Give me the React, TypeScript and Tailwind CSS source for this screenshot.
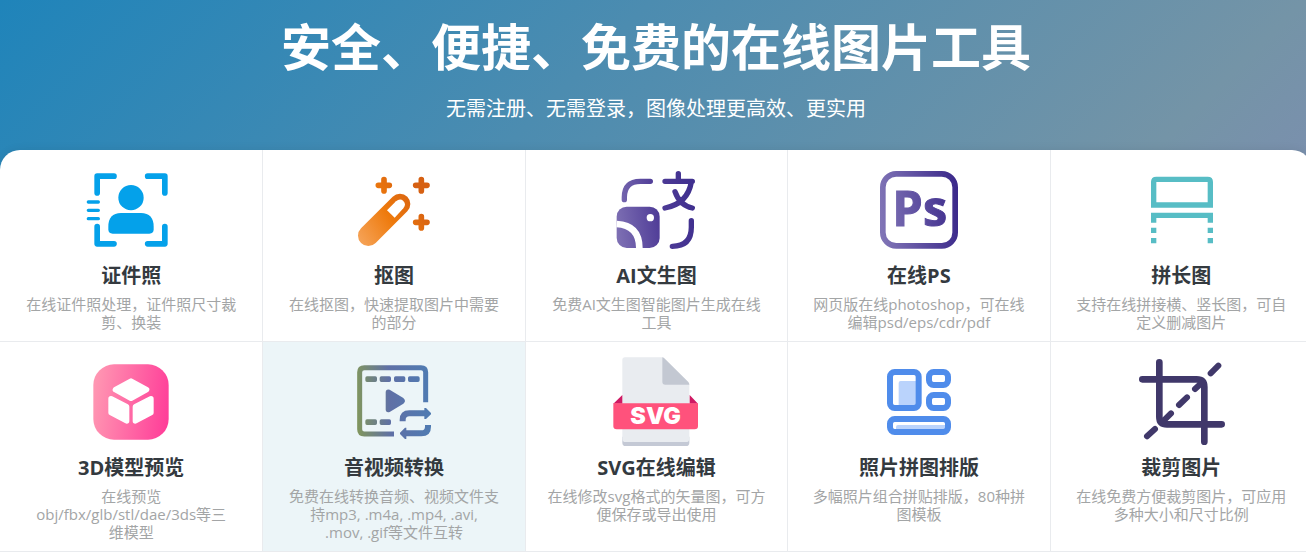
import React from 'react';

interface Tool {
  name: string;
  description: string;
  icon: React.ReactNode;
  active?: boolean;
}

interface IconProps {
  viewBox: string;
  children: React.ReactNode;
}

const Icon = ({ viewBox, children }: IconProps) => (
  <svg viewBox={viewBox} className="h-[90px] w-[90px]" fill="none" aria-hidden="true">
    {children}
  </svg>
);

const IdPhotoIcon = () => (
  <Icon viewBox="258 45 270 270">
    <g stroke="#04a1ea" strokeLinecap="round" strokeLinejoin="round">
      <path
        strokeWidth="17"
        d="M342 78.5H291.5V129M443 78.5H494.5V129M291.5 230V281.5H342M443 281.5H494.5V230"
      />
      <path strokeWidth="10" d="M265 156H295M265 181H295M265 206H295" />
    </g>
    <circle cx="393" cy="143" r="38" fill="#04a1ea" />
    <path
      fill="#04a1ea"
      d="M363 189H423Q461 190 461 230V238Q461 251 448 251H338Q325 251 325 238V230Q325 190 363 189Z"
    />
  </Icon>
);

const CutoutIcon = () => (
  <Icon viewBox="261 45 270 270">
    <defs>
      <linearGradient id="cutout" gradientUnits="userSpaceOnUse" x1="295" y1="270" x2="480" y2="150">
        <stop offset="0" stopColor="#f5a154" />
        <stop offset="0.5" stopColor="#ee7a0c" />
        <stop offset="1" stopColor="#d66012" />
      </linearGradient>
    </defs>
    <g stroke="url(#cutout)" strokeLinecap="round">
      <path strokeWidth="62" d="M319 257L414 162" />
      <path
        strokeWidth="17"
        d="M349 106H382M366 89V123M461 106H495M478 89V123M461 217H495M478 200V234"
      />
    </g>
    <path fill="#fff" d="M375 181L402 154Q414 144 424 153Q434 163 424 175L398 203Z" />
  </Icon>
);

const TextToImageIcon = () => (
  <Icon viewBox="258 45 270 270">
    <defs>
      <linearGradient id="textToImage" gradientUnits="userSpaceOnUse" x1="275" y1="230" x2="510" y2="200">
        <stop offset="0" stopColor="#7d6fb3" />
        <stop offset="0.55" stopColor="#4f3c97" />
        <stop offset="1" stopColor="#40308f" />
      </linearGradient>
    </defs>
    <path
      stroke="url(#textToImage)"
      strokeWidth="16"
      strokeLinecap="round"
      strokeLinejoin="round"
      d="M298 149V142Q298 94 346 94H376M460 71V94M420 94H502M499 96Q488 161 420 174M450 125Q464 166 502 174M499 212V232Q499 289 442 289"
    />
    <rect x="275" y="170" width="129" height="124" rx="30" fill="url(#textToImage)" />
    <path stroke="#fff" strokeWidth="20" d="M275 222Q343 226 343 294" />
    <circle cx="376" cy="203" r="11" fill="#fff" />
  </Icon>
);

const PsIcon = () => (
  <Icon viewBox="261 45 270 270">
    <defs>
      <linearGradient id="ps" gradientUnits="userSpaceOnUse" x1="280" y1="190" x2="512" y2="170">
        <stop offset="0" stopColor="#8074b6" />
        <stop offset="1" stopColor="#3c2a8b" />
      </linearGradient>
    </defs>
    <rect x="287.5" y="71.5" width="217" height="216" rx="40" stroke="url(#ps)" strokeWidth="17" />
    <text
      x="316"
      y="229"
      fill="url(#ps)"
      stroke="url(#ps)"
      strokeWidth="3"
      fontFamily="Open Sans, sans-serif"
      fontWeight="700"
      fontSize="146"
    >
      Ps
    </text>
  </Icon>
);

const LongImageIcon = () => (
  <Icon viewBox="270 45 270 270">
    <path
      stroke="#57bdc5"
      strokeWidth="16"
      d="M323 165V96Q323 88 331 88H485Q493 88 493 96V165ZM323 218V196H493V218"
    />
    <path fill="#57bdc5" d="M315 233h16v16h-16zM485 233h16v16h-16zM315 264h16v16h-16zM485 264h16v16h-16z" />
  </Icon>
);

const ModelIcon = () => (
  <Icon viewBox="258 51 270 270">
    <defs>
      <linearGradient id="model" gradientUnits="userSpaceOnUse" x1="280" y1="170" x2="506" y2="200">
        <stop offset="0" stopColor="#ff96b2" />
        <stop offset="1" stopColor="#ff3f99" />
      </linearGradient>
    </defs>
    <rect x="280" y="73" width="226" height="226" rx="62" fill="url(#model)" />
    <path
      fill="#fff"
      stroke="#fff"
      strokeWidth="16"
      strokeLinejoin="round"
      d="M393 123L440 149L393 175L346 149ZM333 176L380 200V243L333 218ZM453 176L406 200V243L453 218Z"
    />
  </Icon>
);

const MediaIcon = () => (
  <Icon viewBox="261 51 270 270">
    <defs>
      <linearGradient id="media" gradientUnits="userSpaceOnUse" x1="286" y1="200" x2="506" y2="190">
        <stop offset="0" stopColor="#80955f" />
        <stop offset="0.45" stopColor="#5f70a6" />
        <stop offset="1" stopColor="#4f7bb2" />
      </linearGradient>
    </defs>
    <path
      stroke="url(#media)"
      strokeWidth="15"
      d="M491 187V97Q491 83 477 83H307Q293 83 293 97V268Q293 282 307 282H396"
    />
    <g fill="url(#media)">
      <path d="M315 109h25q5 0 5 5v7q0 5-5 5h-25q-5 0-5-5v-7q0-5 5-5zM358 109h24q5 0 5 5v7q0 5-5 5h-24q-5 0-5-5v-7q0-5 5-5zM401 109h24q5 0 5 5v7q0 5-5 5h-24q-5 0-5-5v-7q0-5 5-5zM443 109h25q5 0 5 5v7q0 5-5 5h-25q-5 0-5-5v-7q0-5 5-5z" />
      <path d="M315 238h25q5 0 5 5v7q0 5-5 5h-25q-5 0-5-5v-7q0-5 5-5zM358 238h24q5 0 5 5v7q0 5-5 5h-24q-5 0-5-5v-7q0-5 5-5z" />
      <path d="M371 158Q371 146 383 149L424 174Q434 183 424 191L383 216Q371 219 371 208Z" />
      <path d="M487 204L492 204L507 219V223L492 237H487ZM433 263H429L414 278V282L429 297H433Z" />
    </g>
    <path
      stroke="url(#media)"
      strokeWidth="18"
      d="M422 244V240Q422 220 442 220H490M498 255V260Q498 280 478 280H430"
    />
  </Icon>
);

const SvgFileIcon = () => (
  <Icon viewBox="257 51 270 270">
    <path fill="#c4c9d5" d="M291 290H492V308Q492 318 482 318H301Q291 318 291 308Z" />
    <path fill="#e9ecf0" d="M299 52H411L492 134V296Q492 306 482 306H301Q291 306 291 296V60Q291 52 299 52Z" />
    <path fill="#c3c8d2" d="M411 52Q414 52 417 55L489 126Q492 129 492 134H420Q411 134 411 125Z" />
    <path fill="#cf1a63" d="M264 191L291 165V191ZM518 191L493 165V191Z" />
    <path fill="#ff527c" d="M264 190H518V258Q518 268 508 268H274Q264 268 264 258Z" />
    <text
      x="391"
      y="253"
      textAnchor="middle"
      fill="#fff"
      fontFamily="Inter, sans-serif"
      fontWeight="900"
      fontSize="70"
    >
      SVG
    </text>
  </Icon>
);

const CollageIcon = () => (
  <Icon viewBox="261 51 270 270">
    <path fill="#bad3fc" d="M341 123H390V198H335V129Q335 123 341 123ZM333 255H478V272H327V261Q327 255 333 255Z" />
    <g stroke="#4f8ceb" strokeWidth="18">
      <rect x="309" y="96" width="86" height="108" rx="14" />
      <rect x="426" y="96" width="57" height="39" rx="14" />
      <rect x="426" y="165" width="57" height="39" rx="14" />
      <rect x="309" y="237" width="174" height="39" rx="14" />
    </g>
  </Icon>
);

const CropIcon = () => (
  <Icon viewBox="270 51 270 270">
    <g stroke="#40386a" strokeLinecap="round">
      <path strokeWidth="20" d="M340 67V230Q340 253 363 253H527M289 118H452Q475 118 475 141V305" />
      <path
        strokeWidth="18"
        d="M303 289L327 267M353 242L375 220M399 195L423 172M447 147L470 126M494 100L517 77"
      />
    </g>
  </Icon>
);

const tools: Tool[] = [
  { name: '证件照', description: '在线证件照处理，证件照尺寸裁剪、换装', icon: <IdPhotoIcon /> },
  { name: '抠图', description: '在线抠图，快速提取图片中需要的部分', icon: <CutoutIcon /> },
  { name: 'AI文生图', description: '免费AI文生图智能图片生成在线工具', icon: <TextToImageIcon /> },
  { name: '在线PS', description: '网页版在线photoshop，可在线编辑psd/eps/cdr/pdf', icon: <PsIcon /> },
  { name: '拼长图', description: '支持在线拼接横、竖长图，可自定义删减图片', icon: <LongImageIcon /> },
  { name: '3D模型预览', description: '在线预览\nobj/fbx/glb/stl/dae/3ds等三\n维模型', icon: <ModelIcon /> },
  {
    name: '音视频转换',
    description: '免费在线转换音频、视频文件支持mp3, .m4a, .mp4, .avi,\n.mov, .gif等文件互转',
    icon: <MediaIcon />,
    active: true,
  },
  { name: 'SVG在线编辑', description: '在线修改svg格式的矢量图，可方便保存或导出使用', icon: <SvgFileIcon /> },
  { name: '照片拼图排版', description: '多幅照片组合拼贴排版，80种拼图模板', icon: <CollageIcon /> },
  { name: '裁剪图片', description: '在线免费方便裁剪图片，可应用多种大小和尺寸比例', icon: <CropIcon /> },
];

const ToolCard = ({ name, description, icon, active }: Tool) => (
  <a
    href="#"
    className={`flex flex-col items-center border-b border-l border-[#e9ebee] px-5 pt-[15px] pb-[10px] text-center nth-[5n+1]:border-l-0 ${
      active ? 'bg-[#ecf5f8]' : ''
    }`}
  >
    {icon}
    <h2 className="mt-[9px] text-[20px] leading-6 font-bold text-[#343a3f]">{name}</h2>
    <p className="mt-[7px] text-[15px] leading-[18px] whitespace-pre-line text-[#a3a5a6]">{description}</p>
  </a>
);

const App = () => {
  return (
    <div className="overflow-hidden bg-white font-['Open_Sans','Noto_Sans_CJK_SC',sans-serif]">
      <main className="min-w-[1312px] bg-[linear-gradient(135deg,#1f84ba_0%,#4c8cb0_35%,#7494a7_70%,#7b8fae_80%)]">
        <header className="pt-[11px] pb-[27px] text-center text-white">
          <h1 className="text-[50px] leading-[72px] font-bold">安全、便捷、免费的在线图片工具</h1>
          <p className="mt-3 text-[20px] leading-7">无需注册、无需登录，图像处理更高效、更实用</p>
        </header>
        <section className="grid grid-cols-5 overflow-hidden rounded-t-[20px] bg-white shadow-[0_0_10px_rgba(0,0,0,0.08)]">
          {tools.map((tool) => (
            <ToolCard key={tool.name} {...tool} />
          ))}
        </section>
      </main>
    </div>
  );
};

export default App;
